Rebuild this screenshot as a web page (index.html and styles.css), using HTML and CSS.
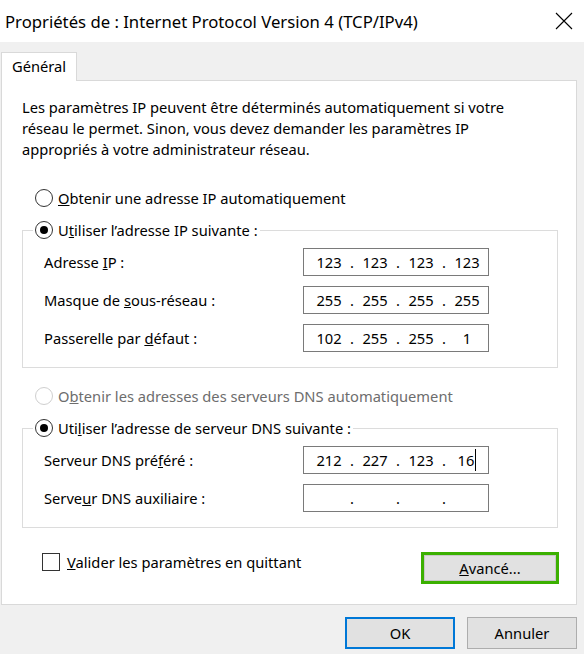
FILE: index.html
```html
<!DOCTYPE html>
<html lang="fr">
<head>
<meta charset="utf-8">
<title>Propriétés de : Internet Protocol Version 4 (TCP/IPv4)</title>
<link rel="stylesheet" href="styles.css">
</head>
<body>
<div class="window">
  <header class="titlebar">
    <span class="title">Propriétés de : Internet Protocol Version 4 (TCP/IPv4)</span>
    <svg class="close" width="18" height="18" viewBox="0 0 18 18"><path d="M1 1L17 17M17 1L1 17" stroke="#000" stroke-width="1.1" fill="none"/></svg>
  </header>
  <div class="tabs"><div class="tab">Général</div></div>
  <div class="panel">
    <p class="intro">Les paramètres IP peuvent être déterminés automatiquement si votre<br>réseau le permet. Sinon, vous devez demander les paramètres IP<br>appropriés à votre administrateur réseau.</p>

    <div class="radio-row standalone"><span class="radio"></span><span><u>O</u>btenir une adresse IP automatiquement</span></div>

    <fieldset class="group">
      <legend class="radio-row"><span class="radio checked"></span><span>U<u>t</u>iliser l’adresse IP suivante :</span></legend>
      <div class="fields">
        <div class="field"><span>Adresse <u>I</u>P :</span>
          <div class="ip"><span class="oct">123</span><span class="dot">.</span><span class="oct">123</span><span class="dot">.</span><span class="oct">123</span><span class="dot">.</span><span class="oct">123</span></div></div>
        <div class="field"><span>Masque de <u>s</u>ous-réseau :</span>
          <div class="ip"><span class="oct">255</span><span class="dot">.</span><span class="oct">255</span><span class="dot">.</span><span class="oct">255</span><span class="dot">.</span><span class="oct">255</span></div></div>
        <div class="field"><span>Passerelle par <u>d</u>éfaut :</span>
          <div class="ip"><span class="oct">102</span><span class="dot">.</span><span class="oct">255</span><span class="dot">.</span><span class="oct">255</span><span class="dot">.</span><span class="oct">1</span></div></div>
      </div>
    </fieldset>

    <div class="radio-row standalone second disabled"><span class="radio"></span><span>O<u>b</u>tenir les adresses des serveurs DNS automatiquement</span></div>

    <fieldset class="group group-dns">
      <legend class="radio-row"><span class="radio checked"></span><span>Uti<u>l</u>iser l’adresse de serveur DNS suivante :</span></legend>
      <div class="fields">
        <div class="field"><span>Serveur DNS pré<u>f</u>éré :</span>
          <div class="ip"><span class="oct">212</span><span class="dot">.</span><span class="oct">227</span><span class="dot">.</span><span class="oct">123</span><span class="dot">.</span><span class="oct">16<span class="caret"></span></span></div></div>
        <div class="field"><span>Serve<u>u</u>r DNS auxiliaire :</span>
          <div class="ip"><span class="oct"></span><span class="dot">.</span><span class="oct"></span><span class="dot">.</span><span class="oct"></span><span class="dot">.</span><span class="oct"></span></div></div>
      </div>
    </fieldset>

    <div class="bottom-row">
      <label class="check-row"><span class="checkbox"></span><span><u>V</u>alider les paramètres en quittant</span></label>
      <div class="focus-ring"><button class="btn advanced"><u>A</u>vancé...</button></div>
    </div>
  </div>
  <footer class="buttons">
    <button class="btn ok">OK</button>
    <button class="btn cancel">Annuler</button>
  </footer>
</div>
</body>
</html>
```

FILE: styles.css
```css
* { box-sizing: border-box; }
html, body { margin: 0; padding: 0; }
body {
  font-family: "Segoe UI", "Noto Sans", sans-serif;
  font-size: 14.7px;
  color: #000;
  background: #f0f0f0;
}
.window {
  width: 584px;
  height: 654px;
  background: #f0f0f0;
  display: flex;
  flex-direction: column;
  overflow: hidden;
}
.titlebar {
  height: 42px;
  background: #fff;
  display: flex;
  align-items: center;
  justify-content: space-between;
  padding: 0 11px 0 5px;
}
.title { font-size: 16.7px; }
.close { display: block; }

.tabs {
  height: 38px;
  display: flex;
  align-items: flex-end;
  padding-left: 1px;
}
.tab {
  width: 76px;
  height: 29px;
  margin-bottom: -1px;
  position: relative;
  z-index: 1;
  background: #fff;
  border: 1px solid #d9d9d9;
  border-bottom: none;
  padding-left: 10px;
  line-height: 27px;
}
.panel {
  margin-left: 1px;
  width: 576px;
  height: 525px;
  background: #fff;
  border: 1px solid #d9d9d9;
  padding-top: 16px;
}
.intro {
  margin: 0;
  padding-left: 20px;
  line-height: 21px;
}
.radio-row {
  display: flex;
  align-items: center;
  gap: 5px;
  height: 20px;
}
.standalone {
  margin-top: 28px;
  padding-left: 33px;
}
.standalone.second { margin-top: 18px; }
.disabled { color: #6d6d6d; }
.radio {
  width: 18px;
  height: 18px;
  border: 1px solid #333;
  border-radius: 50%;
  display: flex;
  align-items: center;
  justify-content: center;
  background: #fff;
}
.radio.checked::after {
  content: "";
  width: 8px;
  height: 8px;
  border-radius: 50%;
  background: #000;
}
.disabled .radio { border-color: #cfcfcf; }

.group {
  margin: 12px 0 0 20px;
  width: 536px;
  padding: 0;
  border: 1px solid #dcdcdc;
}
.group-dns { margin-top: 12px; }
.group legend {
  margin-left: 10px;
  padding: 0 2px;
}
.fields {
  padding: 8px 0 15px 21px;
  display: flex;
  flex-direction: column;
  gap: 10px;
}
.group-dns .fields { padding-top: 8px; padding-bottom: 15px; }
.field {
  display: grid;
  grid-template-columns: 259px 186px;
  align-items: center;
  height: 28px;
}
.ip {
  width: 186px;
  height: 28px;
  border: 1px solid #7a7a7a;
  display: flex;
  align-items: center;
  padding-left: 8px;
}
.oct {
  width: 34px;
  text-align: center;
  display: inline-flex;
  justify-content: center;
  align-items: center;
}
.dot {
  width: 12px;
  text-align: center;
}
.caret {
  display: inline-block;
  width: 1px;
  height: 22px;
  background: #000;
  margin-left: 1px;
}

.bottom-row {
  margin-top: 24px;
  padding: 0 17px 0 40px;
  display: flex;
  justify-content: space-between;
  align-items: flex-start;
}
.check-row {
  display: flex;
  align-items: center;
  gap: 7px;
}
.checkbox {
  width: 18px;
  height: 18px;
  border: 1px solid #333;
  background: #fff;
}
.focus-ring {
  border: 3px solid #3bb000;
  width: 138px;
  height: 32px;
}
.btn {
  font-family: inherit;
  font-size: 14.7px;
  color: #000;
  background: #e1e1e1;
  border: 1px solid #adadad;
  margin: 0;
  padding: 0;
}
.advanced {
  width: 100%;
  height: 100%;
  border-color: #c8c8c8;
}
.buttons {
  display: flex;
  justify-content: flex-end;
  gap: 12px;
  padding: 12px 7px 0 0;
}
.ok, .cancel {
  width: 110px;
  height: 32px;
}
.ok { border: 2px solid #0078d7; }
```
